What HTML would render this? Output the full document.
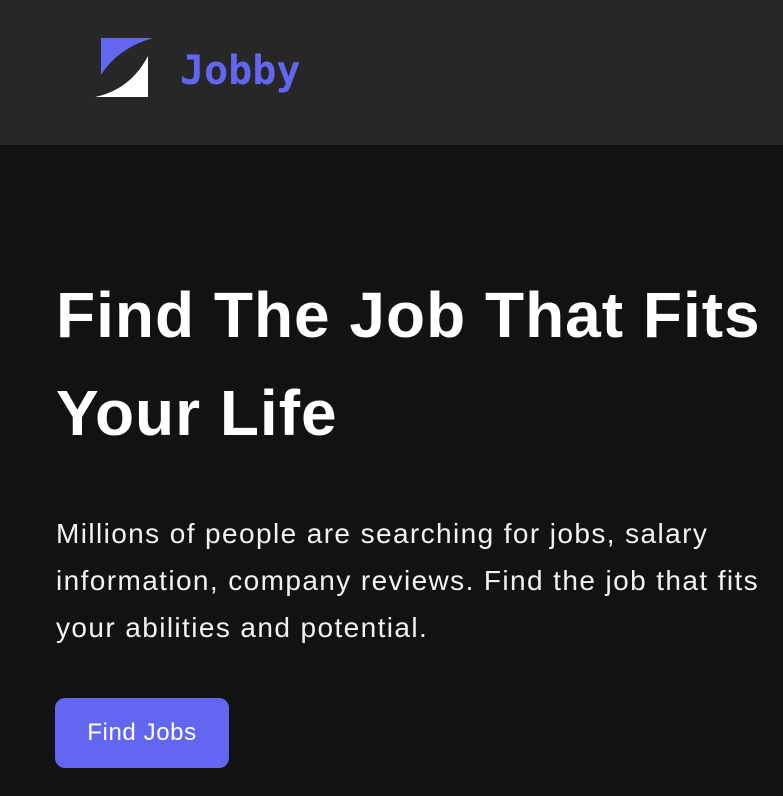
<!DOCTYPE html>
<html><head><style>
body{margin:0;background:#121212;width:783px;height:796px;overflow:hidden;font-family:"Liberation Sans",sans-serif;color:#fff}
.hd{height:145px;background:#272727;position:relative}
.logo{position:absolute;left:0;top:0}
.brand{position:absolute;left:180px;top:48px;font-family:"DejaVu Sans Mono",monospace;font-weight:bold;font-size:40px;color:#6366f1}
h1{position:absolute;left:56px;top:266px;margin:0;font-size:64px;line-height:98px;font-weight:bold;width:727px;letter-spacing:1px}
p{position:absolute;left:56px;top:510px;margin:0;font-size:28px;line-height:47px;width:727px;color:#f2f2f2;letter-spacing:1.4px}
.btn{position:absolute;left:55px;top:698px;width:174px;height:70px;background:#6366f1;border-radius:10px;font-size:24px;line-height:70px;text-align:center;letter-spacing:0.6px}
</style></head><body>
<div class="hd">
<svg class="logo" width="160" height="145"><path d="M101 38H153Q118 48 101 75Z" fill="#6366f1"/><path d="M95 97Q130 90 148 56V97Z" fill="#fff"/></svg>
<div class="brand">Jobby</div>
</div>
<h1>Find The Job That Fits Your Life</h1>
<p>Millions of people are searching for jobs, salary information, company reviews. Find the job that fits your abilities and potential.</p>
<div class="btn">Find Jobs</div>
</body></html>
